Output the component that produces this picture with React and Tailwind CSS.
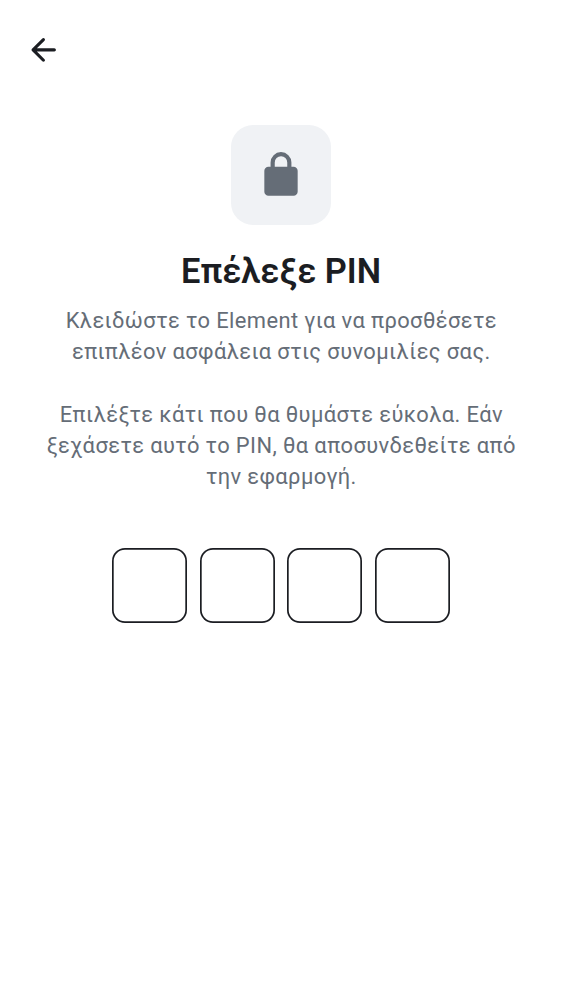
export default function App() {
  return (
    <main className="flex h-[1000px] w-[562px] flex-col overflow-hidden bg-white font-['Roboto',sans-serif]">
      <header className="flex h-[100px] items-center pl-[25px]">
        <button aria-label="Πίσω" className="size-[37.5px]">
          <svg viewBox="-0.2 -0.1 24 24" className="size-full fill-[#1b1d22]">
            <path d="m10.875 19.3-6.6-6.6a.9.9 0 0 1-.213-.325A1.1 1.1 0 0 1 4 12q0-.2.063-.375a.9.9 0 0 1 .212-.325l6.6-6.6a.98.98 0 0 1 .687-.287.93.93 0 0 1 .713.287q.3.275.313.688a.93.93 0 0 1-.288.712L7.4 11h11.175q.424 0 .713.287.287.288.287.713 0 .424-.287.713a.97.97 0 0 1-.713.287H7.4l4.9 4.9q.275.275.287.7a.87.87 0 0 1-.287.7q-.274.3-.7.3a.98.98 0 0 1-.725-.3" />
          </svg>
        </button>
      </header>
      <section className="mt-[25px] flex flex-col items-center text-center">
        <div className="flex size-[100px] items-center justify-center rounded-[22px] bg-[#f0f2f5]">
          <svg viewBox="0 0 24 24" className="size-[50px] fill-[#656d77]">
            <path d="M6 22q-.824 0-1.412-.587A1.93 1.93 0 0 1 4 20V10q0-.825.588-1.412A1.93 1.93 0 0 1 6 8h1V6q0-2.075 1.463-3.537Q9.926 1 12 1t3.537 1.463T17 6v2h1q.824 0 1.413.588Q20 9.175 20 10v10q0 .824-.587 1.413A1.93 1.93 0 0 1 18 22zM9 8h6V6q0-1.25-.875-2.125A2.9 2.9 0 0 0 12 3q-1.25 0-2.125.875A2.9 2.9 0 0 0 9 6z" />
          </svg>
        </div>
        <h1 className="mt-[25px] text-[34.4px] font-semibold leading-[42px] text-[#1b1d22]">Επέλεξε PIN</h1>
        <p className="mt-[13px] pl-[0.7px] text-[21.9px] leading-[31.25px] tracking-[0.39px] text-[#656d77]">
          Κλειδώστε το Element για να προσθέσετε<br />
          επιπλέον ασφάλεια στις συνομιλίες σας.<br />
          <br />
          Επιλέξτε κάτι που θα θυμάστε εύκολα. Εάν<br />
          ξεχάσετε αυτό το PIN, θα αποσυνδεθείτε από<br />
          την εφαρμογή.
        </p>
      </section>
      <div className="mt-[55px] flex justify-center gap-[12.5px]">
        {[0, 1, 2, 3].map((digit) => (
          <div key={digit} className="size-[75px] rounded-[13px] shadow-[inset_0_0_0_1.7px_#1b1d22]" />
        ))}
      </div>
    </main>
  );
}
